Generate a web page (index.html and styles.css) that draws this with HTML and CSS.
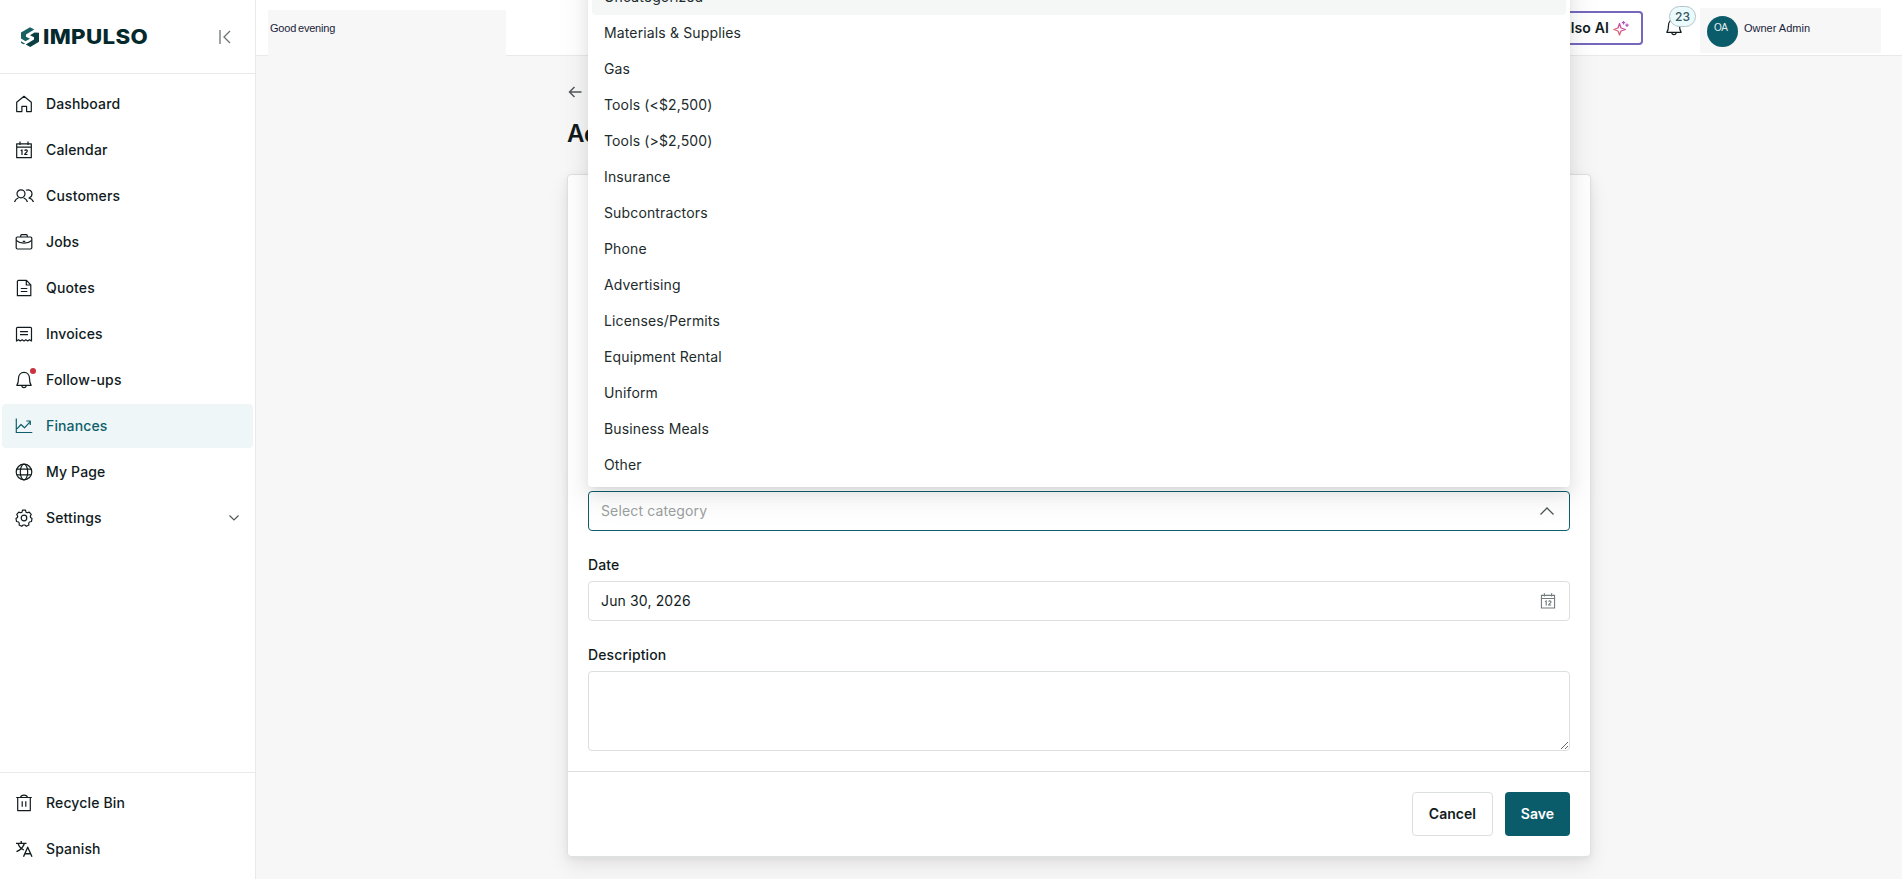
FILE: index.html
```html
<!DOCTYPE html>
<html lang="en">
<head>
<meta charset="utf-8">
<title>Impulso</title>
<link rel="stylesheet" href="styles.css">
</head>
<body>
<div class="app">
  <aside class="sidebar">
    <div class="brand">
      <div class="logo">
        <svg class="logo-mark" viewBox="0 0 18 20" width="18" height="20"><path d="M0 5.500 9 .2 13.300 2.500 5 7.600v2.200L9 11.800 4.500 14.300 0 11.500z" fill="#176064"/><path d="M18 5.800v9L9.300 20l-4.600-2.500 8.300-5V10.300L9 8.200l4.500-2.600z" fill="#0b3f43"/><path d="M0 14.300 4.200 16.800 2.500 17.300 0 16z" fill="#176064"/></svg>
        <svg class="wordmark" width="106" height="24" viewBox="0 0 106 24"><text x="0" y="19" textLength="105" lengthAdjust="spacingAndGlyphs">IMPULSO</text></svg>
      </div>
      <svg class="collapse" viewBox="0 0 12 14" width="12" height="14"><path d="M1 0v14M11 1 5 7l6 6"/></svg>
    </div>
    <nav class="nav">
      <a class="item"><svg class="ico" viewBox="0 0 20 20"><path d="M2.700 8.300 10 2.300l7.300 6v9.300h-4.700v-5.300H7.900v5.300H2.700z"/></svg>Dashboard</a>
      <a class="item"><svg class="ico" viewBox="0 0 20 20"><path d="M2.700 3.800h14.600v13.900H2.700zM2.700 7.200h14.600M6 1.500v3.600M14 1.500v3.600M6.700 10.700l1.300-.8v5M10.800 10.800c.2-1.300 2.600-1.200 2.500.2 0 1.200-2.500 2.200-2.600 3.500h2.800"/></svg>Calendar</a>
      <a class="item"><svg class="ico" viewBox="0 0 20 20"><circle cx="7" cy="7.800" r="4"/><path d="M.5 16c.8-2.400 2.200-3.600 4-4.300M9.500 11.700c1.800.7 3.200 1.900 4 4.300M12 4.300c3.500-1.300 6 .8 6 3.500 0 2-1.200 3.700-3 4.200 2.300.5 3.700 1.800 4.500 4"/></svg>Customers</a>
      <a class="item"><svg class="ico" viewBox="0 0 20 20"><rect x="2.200" y="5" width="15.600" height="12" rx="1.200"/><path d="M6.700 5V3.700c0-.6.4-1 1-1h4.600c.6 0 1 .4 1 1V5M2.300 8.500c4.400 3.600 11 3.600 15.400 0M8.800 9.300h2.400"/></svg>Jobs</a>
      <a class="item"><svg class="ico" viewBox="0 0 20 20"><path d="M4.300 2.300h8.200L16.800 6.800v10.900H3.400V3.200zM12.300 2.500v4.500h4.400M6.800 10.500h6.500M6.800 13.500h6.500"/></svg>Quotes</a>
      <a class="item"><svg class="ico" viewBox="0 0 20 20"><path d="M2.500 17V4.400c0-.8.300-1.100 1-1.100h13c.7 0 1 .3 1 1.100V17l-2-1.300-1.800 1.200-1.800-1.200L10 16.900l-1.900-1.200-1.800 1.200-1.800-1.200zM6 7.700h8M6 10.700h8"/></svg>Invoices</a>
      <a class="item"><span class="ico-wrap"><svg class="ico" viewBox="0 0 20 20"><path d="M2.800 15.300C4 13.600 4.500 12 4.500 8.500 4.500 4.900 6.700 2.400 10 2.400s5.500 2.500 5.500 6.100c0 3.500.5 5.100 1.700 6.800zM7.800 15.500c.2 2.900 4.200 2.900 4.400 0"/></svg><i class="dot"></i></span>Follow-ups</a>
      <a class="item active"><svg class="ico" viewBox="0 0 20 20"><path d="M2.300 2.500v14h16M3 12.800l4-4.300 3.500 3.300 5.500-6M12.300 5h4v4"/></svg>Finances</a>
      <a class="item"><svg class="ico" viewBox="0 0 20 20"><circle cx="10" cy="10" r="7.800"/><ellipse cx="10" cy="10" rx="3.700" ry="7.800"/><path d="M2.900 7.200h14.200M2.900 12.800h14.200"/></svg>My Page</a>
      <a class="item"><svg class="ico" viewBox="0 0 20 20"><circle cx="10" cy="10" r="2.800"/><path d="M8 4.200 8.500 2.200h3l.5 2 1.200.6 2-.7 2 2.300-.9 1.900.3 1.200 1.400 1-.5 3-2 .5-.8 1 .2 2-2.600 1.300-1.500-1.300H9.200l-1.500 1.300-2.600-1.300.2-2-.8-1-2-.5-.5-3 1.400-1 .3-1.200-.9-1.900 2-2.300 2 .7z"/></svg>Settings<svg class="chev" viewBox="0 0 12 8" width="12" height="8"><path d="m1.500 1.500 4.500 4.500 4.500-4.500"/></svg></a>
    </nav>
    <div class="nav nav-bottom">
      <a class="item"><svg class="ico" viewBox="0 0 20 20"><path d="M3.700 4.500h12.600v13.100H3.700zM2.200 4.500h15.600M6.700 4.300c.2-3 6.400-3 6.600 0M8.200 8.300v5.500M11.800 8.300v5.500"/></svg>Recycle Bin</a>
      <a class="item"><svg class="ico lang" viewBox="0 0 20 20"><path d="M2 4.300h10.500M7.200 2v2.300M10.300 4.500C9.300 8.500 6 11 2.500 12.700M4.200 4.700c.8 3 3.300 5.300 5.600 6.300M9.500 17.700l4.200-9.500 4.300 9.500M11 14.700h5.500"/></svg>Spanish</a>
    </div>
  </aside>
  <div class="main">
    <header class="topbar">
      <div class="greeting">Good evening</div>
      <div class="tools">
        <button class="ai">Impulso AI<svg viewBox="0 0 16 16" width="16" height="16"><defs><linearGradient id="g" x1="0" y1="1" x2="1" y2="0"><stop offset="0" stop-color="#e9804c"/><stop offset=".5" stop-color="#d0508e"/><stop offset="1" stop-color="#a855c8"/></linearGradient></defs><path d="M6.500 3.500 8 8l4.500 1.500L8 11l-1.500 4L5 11 .8 9.500 5 8z" fill="none" stroke="url(#g)" stroke-width="1.300" stroke-linejoin="round"/><path d="M10.500 1v3.400M8.800 2.700h3.400M14 3.500v3.400M12.300 5.200h3.400" stroke="#b455bd" stroke-width="1.200" fill="none"/></svg></button>
        <div class="bell"><svg class="ico" viewBox="0 0 20 20"><path d="M2.800 15.300C4 13.600 4.500 12 4.500 8.500 4.500 4.900 6.700 2.400 10 2.400s5.500 2.500 5.500 6.100c0 3.500.5 5.100 1.700 6.800zM7.800 15.500c.2 2.900 4.200 2.900 4.400 0"/></svg><span class="count">23</span></div>
        <div class="user"><span class="avatar">OA</span><span>Owner Admin</span></div>
      </div>
    </header>
    <main class="page">
      <a class="back"><svg viewBox="0 0 14 12" width="14" height="12"><path d="M13.500 6H1.500M6.500 1 1.500 6l5 5"/></svg></a>
      <h1>Add Expense</h1>
      <section class="card">
        <div class="fields">
          <div class="field">
            <div class="control select">Select category<svg viewBox="0 0 16 10" width="16" height="10"><path d="m1.500 8.500 6.500-6.500 6.500 6.500"/></svg>
              <div class="menu">
                <div class="opt selected">Uncategorized</div>
                <div class="opt">Materials &amp; Supplies</div>
                <div class="opt">Gas</div>
                <div class="opt">Tools (&lt;$2,500)</div>
                <div class="opt">Tools (&gt;$2,500)</div>
                <div class="opt">Insurance</div>
                <div class="opt">Subcontractors</div>
                <div class="opt">Phone</div>
                <div class="opt">Advertising</div>
                <div class="opt">Licenses/Permits</div>
                <div class="opt">Equipment Rental</div>
                <div class="opt">Uniform</div>
                <div class="opt">Business Meals</div>
                <div class="opt">Other</div>
              </div>
            </div>
          </div>
          <div class="field">
            <label>Date</label>
            <div class="control">Jun 30, 2026<svg class="cal" viewBox="0 0 20 20" width="18" height="18"><path d="M2.700 3.800h14.600v13.900H2.700zM2.700 7.200h14.600M6 1.500v3.600M14 1.500v3.600M6.700 10.700l1.300-.8v5M10.800 10.800c.2-1.300 2.600-1.200 2.500.2 0 1.200-2.500 2.200-2.600 3.500h2.800"/></svg></div>
          </div>
          <div class="field">
            <label>Description</label>
            <textarea></textarea>
          </div>
        </div>
        <footer class="actions">
          <button class="btn">Cancel</button>
          <button class="btn primary">Save</button>
        </footer>
      </section>
    </main>
  </div>
</div>
</body>
</html>
```
FILE: styles.css
```css
* { box-sizing: border-box; }
body { margin: 0; font: 400 14px/20px Inter, sans-serif; letter-spacing: .14px; color: #111b1d; background: #f7f7f7; overflow: hidden; }
svg { flex: none; }
svg path, svg circle, svg ellipse, svg rect { vector-effect: non-scaling-stroke; }
button { font: inherit; letter-spacing: inherit; color: inherit; }
.app { display: flex; height: 879px; }
.sidebar { width: 256px; flex: none; background: #fff; border-right: 1px solid #e8e9e9; display: flex; flex-direction: column; }
.brand { height: 74px; border-bottom: 1px solid #e8e9e9; display: flex; align-items: center; justify-content: space-between; padding: 0 24px 0 21px; }
.logo { display: flex; align-items: center; gap: 4px; }
.wordmark { overflow: visible; }
.wordmark text { font: 800 20.5px Inter, sans-serif; letter-spacing: .3px; fill: #04292d; }
.collapse { fill: none; stroke: #6b7375; stroke-width: 1.3; }
.nav { display: flex; flex-direction: column; gap: 2px; padding: 8px 2px; }
.nav-bottom { margin-top: auto; border-top: 1px solid #e8e9e9; }
.item { height: 44px; display: flex; align-items: center; gap: 12px; padding: 0 13px 0 12px; font-weight: 500; border-radius: 4px; }
.item.active { background: #eef6f8; color: #0e5f6b; }
.ico { width: 20px; height: 20px; fill: none; stroke: currentColor; stroke-width: 1.2; stroke-linejoin: round; }
.lang { stroke-width: 1.35; }
.ico-wrap { position: relative; display: flex; }
.dot { position: absolute; width: 6px; height: 6px; border-radius: 50%; background: #cc3340; right: -2px; top: -2px; }
.chev { margin-left: auto; fill: none; stroke: #4f5859; stroke-width: 1.2; }
.main { flex: 1; min-width: 0; }
.topbar { height: 56px; background: #fff; border-bottom: 1px solid #e8e9e9; display: flex; justify-content: space-between; padding: 0 21px 0 12px; }
.greeting { width: 238px; height: 46px; margin-top: 10px; background: #f7f7f7; padding: 8px 2px; font: 11px/20px "Liberation Sans", sans-serif; letter-spacing: -.2px; word-spacing: -1px; color: #1a1c3a; }
.tools { display: flex; align-items: flex-start; }
.ai { height: 34px; margin-top: 11px; border: 2px solid #7468bd; border-radius: 4px; background: #fff; display: flex; align-items: center; gap: 4px; padding: 0 12px; font-weight: 600; }
.bell { position: relative; margin: 17px 0 0 21px; height: 20px; width: 20px; }
.count { position: absolute; left: 5px; top: -11px; width: 27px; height: 21px; border: 1px solid #b2c4c8; border-radius: 11px; background: #eafafd; color: #35565b; font-weight: 500; font-size: 12px; line-height: 19px; text-align: center; }
.user { width: 181px; height: 45px; margin: 8px 0 0 16px; background: #f7f7f7; display: flex; gap: 6px; padding: 8px 7px; font: 11px/24px "Liberation Sans", sans-serif; letter-spacing: 0; color: #1a1c3a; }
.avatar { width: 31px; height: 31px; border-radius: 50%; background: #0b5c6b; color: #e3eef0; padding-left: 7px; font-size: 10px; letter-spacing: -.5px; }
.page { width: 1024px; margin: 0 auto; padding-top: 26px; }
.back { display: flex; height: 20px; align-items: center; }
.back svg { fill: none; stroke: #525b5d; stroke-width: 1.500; margin-left: 1px; }
h1 { margin: 16px 0 24px; font: 600 24px/32px Inter, sans-serif; letter-spacing: 0; }
.card { height: 683px; background: #fff; border: 1px solid #dfe2e2; border-radius: 4px; box-shadow: 0 8px 20px rgba(0,0,0,.09), 0 2px 6px rgba(0,0,0,.05); display: flex; flex-direction: column; }
.fields { flex: 1; display: flex; flex-direction: column; justify-content: flex-end; gap: 24px; padding: 20px; }
.field { display: flex; flex-direction: column; gap: 6px; }
label { font-weight: 500; }
.control { position: relative; height: 40px; border: 1px solid #dcdfe0; border-radius: 4px; display: flex; align-items: center; justify-content: space-between; padding: 0 12px; background: #fff; }
.control > svg { fill: none; stroke: #4d5658; stroke-width: 1.300; margin-right: 2px; }
.control > .cal { stroke: #727b7d; stroke-width: 1.100; margin-right: 0; }
.select { border-color: #0e5f6b; color: #9b9f9f; }
.menu { position: absolute; left: -1px; right: -1px; bottom: 43px; padding: 4px; background: #fff; border-radius: 4px; color: #222b2c; box-shadow: 0 6px 16px rgba(0,0,0,.08), 0 3px 6px -4px rgba(0,0,0,.12), 0 9px 28px 8px rgba(0,0,0,.05); }
.opt { height: 36px; line-height: 36px; padding: 0 12px; border-radius: 4px; }
.opt.selected { background: #f5f7f7; }
textarea { display: block; height: 80px; border: 1px solid #dcdfe0; border-radius: 4px; background: #fff; resize: vertical; outline: 0; }
.actions { height: 85px; flex: none; border-top: 1px solid #dcdfe0; display: flex; justify-content: flex-end; gap: 12px; padding: 20px; }
.btn { height: 44px; padding: 0 16px; border: 1px solid #dcdfe0; border-radius: 4px; background: #fff; font-weight: 600; letter-spacing: 0; }
.primary { background: #0b5c6b; border: 0; color: #fff; }
```
